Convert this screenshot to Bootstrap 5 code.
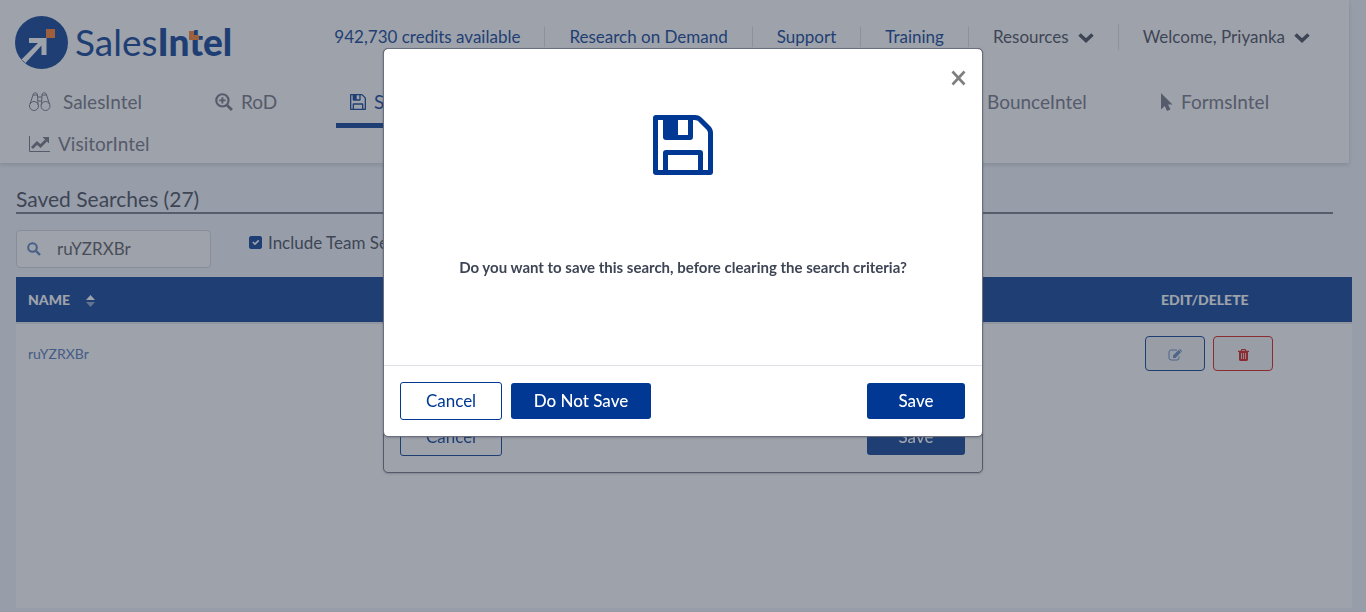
<!DOCTYPE html>
<html lang="en">
<head>
<meta charset="utf-8">
<meta name="viewport" content="width=device-width, initial-scale=1">
<title>SalesIntel - Saved Searches</title>
<link href="https://cdn.jsdelivr.net/npm/bootstrap@5.3.0/dist/css/bootstrap.min.css" rel="stylesheet">
<style>
:root { --brand: #003893; --ink: #3e4555; --soft: #6c7080; }
body { font-family: Lato, "Open Sans", sans-serif; font-size: 17px; line-height: 24px; color: var(--ink); background: #f0f6fc; }
a { color: var(--brand); text-decoration: none; }
.site-header { background: #fff; margin-right: 17px; padding: 10px 0 0 15px; min-height: 163px; box-shadow: 0 2px 4px rgba(62,69,85,.2); }
.brand-row { height: 71px; }
.brand-text { font-size: 37px; line-height: 40px; color: var(--brand); margin-left: 6px; }
.brand-text b { font-weight: 900; }
.brand-accent { position: absolute; left: 114px; top: 9px; }
.top-links { padding-right: 39px; margin-top: 14px; }
.top-links > li { padding: 0 24px; border-left: 1px solid #dcdde6; line-height: 20px; white-space: nowrap; }
.top-links > li:first-child { border-left: 0; }
.top-links > li:last-child { padding: 3px 0 3px 24px; }
.plain-btn { border: 0; background: none; padding: 0; color: inherit; }
.plain-btn .chev { margin: 0 0 2px 9px; }
.product-nav { display: grid; grid-template-columns: 186px 135px 1fr 202px 204px; grid-auto-rows: 42px; font-size: 19px; margin-bottom: -2px; }
.product-nav a { display: flex; align-items: center; padding-left: 14px; color: var(--soft); width: 100%; height: 100%; }
.product-nav a.current { color: var(--brand); box-shadow: 0 5px 0 var(--brand); }
.content-area { padding: 23px 14px 4px 16px; }
.page-title { font-size: 21px; line-height: 26px; margin: 0 19px 16px 0; border-bottom: 2px solid #70747f; font-weight: 400; }
.search-box { width: 195px; height: 38px; background: #fff; border: 1px solid #d2d5dc; border-radius: 4px; padding-left: 10px; }
.search-box input { border: 0; background: none; outline: 0; color: #55555c; min-width: 0; margin-left: 16px; padding: 0; }
.team-check { margin: 1px 0 0 38px; }
.team-check .form-check-input { width: 13px; height: 13px; margin: 0 6px 2px 0; border-radius: 2px; }
.team-check .form-check-input:checked { background-color: var(--brand); border-color: var(--brand); }
.panel { background: #fff; margin-top: 9px; }
.results { margin: 0; width: 100%; font-size: 14px; line-height: 20px; }
.results th { background: var(--brand); color: #fff; padding: 12px; height: 46px; font-weight: 900; }
.results td { padding: 12px; vertical-align: middle; }
.results thead { border-bottom: 2px solid #e4e4ea; }
.results .name-link { color: #4a72b5; }
.results .actions { width: 219px; }
.icon-btn { width: 60px; height: 35px; padding: 0; border-radius: 4px; line-height: 1; background: #f4f5f7; }
.btn-edit, .btn-edit:hover { border: 1px solid var(--brand); color: #5f86c0; }
.btn-del, .btn-del:hover { border: 1px solid #d9130f; color: #d9130f; }
.shade { position: fixed; inset: 0; background: rgba(62,69,86,.5); z-index: 1052; }
.under { z-index: 1050; }
.modal-dialog { max-width: 600px; margin: 48px auto 0; }
.modal-content { border: 1px solid #6b6f7d; border-radius: 5px; box-shadow: 0 1px 2px rgba(62,69,85,.3); }
.modal-body { height: 316px; padding: 66px 16px 0; font-size: 15px; }
.under .modal-body { height: 352px; }
.modal-foot { border-top: 1px solid #dee2e6; padding: 0 17px 1px 16px; height: 71px; }
.close-x { position: absolute; right: 16px; top: 21px; color: #7f7f7f; }
.btn-box { height: 36px; border-radius: 3px; padding: 0; border: 0; font-size: 17px; }
.btn-line, .btn-line:hover { width: 102px; height: 38px; border: 1px solid var(--brand); color: var(--brand); background: #fff; }
.btn-solid, .btn-solid:hover { background: var(--brand); color: #fff; font-weight: 500; }
.w-save { width: 98px; }
.w-dont { width: 140px; margin-left: 9px; }
.question { margin: 80px 0 0; font-weight: 700; line-height: 24px; }
</style>
</head>
<body class="min-vh-100 d-flex flex-column">
<svg class="d-none" xmlns="http://www.w3.org/2000/svg">
  <symbol id="floppy" viewBox="0 0 60 60"><path fill="currentColor" fill-rule="evenodd" d="M3 0h39c3 0 5 1 7 3l8 8c2 2 3 4 3 7v39a3 3 0 0 1-3 3H3a3 3 0 0 1-3-3V3a3 3 0 0 1 3-3zM5 5v50h5V38a3 3 0 0 1 3-3h34a3 3 0 0 1 3 3v17h5V18c0-1-.5-2-1.500-3.500L45 6c-1-1-3-1-5-1v17a3 3 0 0 1-3 3H13a3 3 0 0 1-3-3V5zM25 5v15h10V5zM15 40v15h30V40z"/></symbol>
  <symbol id="chev" viewBox="0 0 16 10"><path fill="none" stroke="currentColor" stroke-width="3.600" d="M1.500 1.500L8 7.500l6.500-6"/></symbol>
</svg>

<header class="site-header">
  <div class="brand-row d-flex justify-content-between align-items-start">
    <a href="#" class="d-flex align-items-center mt-1" aria-label="SalesIntel">
      <svg width="54" height="56" viewBox="0 0 54 56"><circle cx="26.500" cy="28.500" r="26.500" fill="#003893"/><path fill="#fff" d="M14 24h17.500v17h-5V31.500L10.500 49 6.500 45.500 23 29h-9z"/><path fill="#fb7b22" d="M31 15h9v9h-9z"/></svg>
      <span class="brand-text position-relative">Sales<b>Intel</b><svg class="brand-accent" width="11" height="10" viewBox="0 0 11 10"><path fill="#fb7b22" d="M0 0h5v4h5v5H0z"/></svg></span>
    </a>
    <ul class="top-links list-unstyled d-flex align-items-center mb-0">
      <li><a href="#">942,730 credits available</a></li>
      <li><a href="#">Research on Demand</a></li>
      <li><a href="#">Support</a></li>
      <li><a href="#">Training</a></li>
      <li><button class="plain-btn" type="button">Resources<svg class="chev" width="16" height="10"><use href="#chev"/></svg></button></li>
      <li><button class="plain-btn" type="button">Welcome, Priyanka<svg class="chev" width="16" height="10"><use href="#chev"/></svg></button></li>
    </ul>
  </div>
  <nav class="product-nav">
    <a href="#"><svg class="me-2" width="22" height="22" viewBox="1 0 22 22" fill="none" stroke="currentColor"><circle cx="6" cy="15" r="4.500"/><circle cx="17.500" cy="15" r="4.500"/><path d="M2 13L5 4c0-3 4.500-3 4.500 0l.5 10M21.500 13l-3-9c0-3-4.500-3-4.500 0l-.5 10M10 6h4M10 10h3.500M5 4h4.500M14 4h4.500"/></svg><span class="ms-1">SalesIntel</span></a>
    <a href="#"><svg class="me-2" width="18" height="18" viewBox="0 0 17 17" fill="none" stroke="currentColor"><circle cx="7" cy="7" r="5.800" stroke-width="2"/><path stroke-width="2.600" d="M11.500 11.500l4.500 4.500"/><path stroke-width="1.800" d="M4 7h6M7 4v6"/></svg>RoD</a>
    <a href="#" class="current"><svg class="me-2" width="16" height="16"><use href="#floppy"/></svg>Saved Searches</a>
    <a href="#"><svg class="me-2" width="22" height="16" viewBox="0 0 22 16" fill="none" stroke="currentColor"><path d="M1 1h20v14H1zl10 8L21 1"/></svg>BounceIntel</a>
    <a href="#"><svg class="me-2" width="14" height="18" viewBox="0 0 14 18"><path fill="currentColor" d="M2 0l11.500 11.500H9l2.500 5L8 18l-2.200-5L2 16.500z"/></svg>FormsIntel</a>
    <a href="#"><svg class="me-2" width="21" height="16" viewBox="0 0 21 16"><path fill="none" stroke="currentColor" d="M.5 0v15.500H21"/><path fill="none" stroke="currentColor" stroke-width="2.800" d="M3 12l5-5 3.500 3L17 4.500"/><path fill="currentColor" d="M13.500 1H20v6.500z"/></svg>VisitorIntel</a>
  </nav>
</header>

<main class="content-area flex-grow-1 d-flex flex-column">
  <h1 class="page-title">Saved Searches (27)</h1>
  <div class="d-flex align-items-start">
    <div class="search-box d-flex align-items-center">
      <svg class="flex-shrink-0" width="14" height="14" viewBox="0 0 14 14" fill="none" stroke="#4f79bd"><circle cx="5.500" cy="5.500" r="4.300" stroke-width="2"/><path stroke-width="2.400" d="M9 9l4 4"/></svg>
      <input type="text" value="ruYZRXBr" aria-label="Search saved searches">
    </div>
    <label class="team-check d-flex align-items-center"><input class="form-check-input" type="checkbox" checked>Include Team Searches</label>
  </div>
  <div class="panel flex-grow-1">
    <table class="results">
      <thead><tr><th scope="col">NAME<svg class="ms-3" width="9" height="12" viewBox="0 0 9 12"><path fill="#fff" d="M0 5l4.500-5L9 5z"/><path fill="#8aa0cc" d="M0 7h9l-4.500 5z"/></svg></th><th scope="col" class="actions"><span class="ms-3">EDIT/DELETE</span></th></tr></thead>
      <tbody><tr>
        <td><a href="#" class="name-link">ruYZRXBr</a></td>
        <td><div class="d-flex gap-2">
          <button class="btn icon-btn btn-edit" type="button" aria-label="Edit"><svg width="14" height="12" viewBox="0 0 14 12"><path fill="none" stroke="currentColor" d="M9 1H3a2 2 0 0 0-2 2v6a2 2 0 0 0 2 2h6a2 2 0 0 0 2-2V7.500"/><path fill="currentColor" d="M5 9V6.500L10.500 1 13 3.200 7.500 9z M11 .6l1-.6 2 2-.7.900z"/></svg></button>
          <button class="btn icon-btn btn-del" type="button" aria-label="Delete"><svg width="11" height="12" viewBox="0 0 11 12"><path fill="currentColor" fill-rule="evenodd" d="M3.500 0h4l.8 1.800H11V3h-1v8l-1 1H2l-1-1V3H0V1.800h2.700zM4.200 1l-.3.800h3.200L6.800 1zM3 4v6h.8V4zm2.100 0v6h.8V4zm2.100 0v6H8V4z"/></svg></button>
        </div></td>
      </tr></tbody>
    </table>
  </div>
</main>

<div class="modal under d-block">
  <div class="modal-dialog"><div class="modal-content">
    <div class="modal-body"></div>
    <div class="modal-foot d-flex justify-content-between align-items-center">
      <button class="btn btn-box btn-line" type="button">Cancel</button>
      <button class="btn btn-box btn-solid w-save" type="button">Save</button>
    </div>
  </div></div>
</div>
<div class="shade"></div>
<div class="modal d-block" role="dialog" aria-modal="true">
  <div class="modal-dialog"><div class="modal-content">
    <button class="plain-btn close-x d-flex" type="button" aria-label="Close"><svg width="15" height="16" viewBox="0 0 15 16"><path stroke="currentColor" stroke-width="2.600" d="M1.500 1.500l12 13M13.500 1.500l-12 13"/></svg></button>
    <div class="modal-body text-center">
      <svg class="d-block mx-auto" width="60" height="60" color="#003893"><use href="#floppy"/></svg>
      <p class="question">Do you want to save this search, before clearing the search criteria?</p>
    </div>
    <div class="modal-foot d-flex align-items-center">
      <button class="btn btn-box btn-line" type="button">Cancel</button>
      <button class="btn btn-box btn-solid w-dont" type="button">Do Not Save</button>
      <button class="btn btn-box btn-solid w-save ms-auto" type="button">Save</button>
    </div>
  </div></div>
</div>
<script src="https://cdn.jsdelivr.net/npm/bootstrap@5.3.0/dist/js/bootstrap.bundle.min.js"></script>
</body>
</html>
